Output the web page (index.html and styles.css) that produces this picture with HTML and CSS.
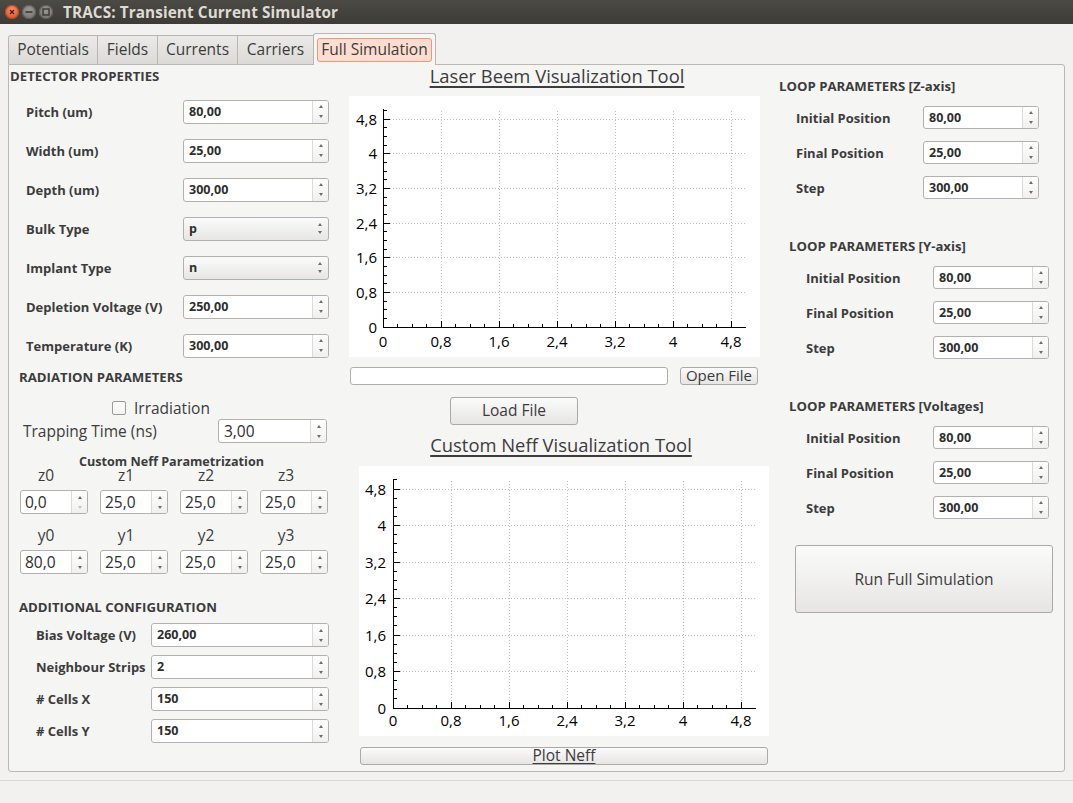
FILE: index.html
```html
<!DOCTYPE html>
<html>
<head>
<meta charset="utf-8">
<title>TRACS</title>
<link rel="stylesheet" href="styles.css">
</head>
<body>
<div class="titlebar">
  <div class="wbtns">
    <span class="wb close"><svg width="14" height="14" viewBox="0 0 14 14"><path d="M5 5L9 9M9 5L5 9" stroke="#4a1e0c" stroke-width="1.3"/></svg></span>
    <span class="wb min"><svg width="14" height="14" viewBox="0 0 14 14"><path d="M3.5 7H10.5" stroke="#3a3935" stroke-width="1.6"/></svg></span>
    <span class="wb max"><svg width="14" height="14" viewBox="0 0 14 14"><rect x="4" y="4" width="6" height="6" fill="none" stroke="#3a3935" stroke-width="1.4"/></svg></span>
  </div>
  <div class="wtitle">TRACS: Transient Current Simulator</div>
</div>

<div class="tabbar">
  <div class="tab t1">Potentials</div>
  <div class="tab t2">Fields</div>
  <div class="tab t3">Currents</div>
  <div class="tab t4">Carriers</div>
  <div class="tab active"><span class="tab-hl">Full Simulation</span></div>
</div>

<div class="pane">
  <!-- LEFT COLUMN -->
  <div class="col-left">
    <div class="sec-h det-h">DETECTOR PROPERTIES</div>
    <div class="det">
      <div class="row"><span class="lbl">Pitch (um)</span><div class="spin"><span class="val">80,00</span><span class="arr"><i class="up"></i><i class="dn"></i></span></div></div>
      <div class="row"><span class="lbl">Width (um)</span><div class="spin"><span class="val">25,00</span><span class="arr"><i class="up"></i><i class="dn"></i></span></div></div>
      <div class="row"><span class="lbl">Depth (um)</span><div class="spin"><span class="val">300,00</span><span class="arr"><i class="up"></i><i class="dn"></i></span></div></div>
      <div class="row"><span class="lbl">Bulk Type</span><div class="combo"><span class="val">p</span><span class="carr"><i class="up"></i><i class="dn"></i></span></div></div>
      <div class="row"><span class="lbl">Implant Type</span><div class="combo"><span class="val">n</span><span class="carr"><i class="up"></i><i class="dn"></i></span></div></div>
      <div class="row"><span class="lbl">Depletion Voltage (V)</span><div class="spin"><span class="val">250,00</span><span class="arr"><i class="up"></i><i class="dn"></i></span></div></div>
      <div class="row"><span class="lbl">Temperature (K)</span><div class="spin"><span class="val">300,00</span><span class="arr"><i class="up"></i><i class="dn"></i></span></div></div>
    </div>

    <div class="sec-h rad-h">RADIATION PARAMETERS</div>
    <div class="irr"><span class="cbox"></span><span class="irr-l">Irradiation</span></div>
    <div class="trap">
      <span class="trap-l">Trapping Time (ns)</span>
      <div class="spin trap-s"><span class="val reg">3,00</span><span class="arr"><i class="up"></i><i class="dn"></i></span></div>
    </div>
    <div class="neff-h">Custom Neff Parametrization</div>
    <div class="sgrid labels">
      <span>z0</span><span>z1</span><span>z2</span><span>z3</span>
    </div>
    <div class="sgrid boxes b1">
      <div class="spin sm"><span class="val reg">0,0</span><span class="arr"><i class="up"></i><i class="dn dis"></i></span></div>
      <div class="spin sm"><span class="val reg">25,0</span><span class="arr"><i class="up"></i><i class="dn"></i></span></div>
      <div class="spin sm"><span class="val reg">25,0</span><span class="arr"><i class="up"></i><i class="dn"></i></span></div>
      <div class="spin sm"><span class="val reg">25,0</span><span class="arr"><i class="up"></i><i class="dn"></i></span></div>
    </div>
    <div class="sgrid labels l2">
      <span>y0</span><span>y1</span><span>y2</span><span>y3</span>
    </div>
    <div class="sgrid boxes b2">
      <div class="spin sm"><span class="val reg">80,0</span><span class="arr"><i class="up"></i><i class="dn"></i></span></div>
      <div class="spin sm"><span class="val reg">25,0</span><span class="arr"><i class="up"></i><i class="dn"></i></span></div>
      <div class="spin sm"><span class="val reg">25,0</span><span class="arr"><i class="up"></i><i class="dn"></i></span></div>
      <div class="spin sm"><span class="val reg">25,0</span><span class="arr"><i class="up"></i><i class="dn"></i></span></div>
    </div>

    <div class="sec-h add-h">ADDITIONAL CONFIGURATION</div>
    <div class="add">
      <div class="row"><span class="lbl">Bias Voltage (V)</span><div class="spin"><span class="val">260,00</span><span class="arr"><i class="up"></i><i class="dn"></i></span></div></div>
      <div class="row"><span class="lbl">Neighbour Strips</span><div class="spin"><span class="val">2</span><span class="arr"><i class="up"></i><i class="dn"></i></span></div></div>
      <div class="row"><span class="lbl"># Cells X</span><div class="spin"><span class="val">150</span><span class="arr"><i class="up"></i><i class="dn"></i></span></div></div>
      <div class="row"><span class="lbl"># Cells Y</span><div class="spin"><span class="val">150</span><span class="arr"><i class="up"></i><i class="dn"></i></span></div></div>
    </div>
  </div>

  <!-- MIDDLE COLUMN -->
  <div class="col-mid">
    <div class="tool-h h1"><span>Laser Beem Visualization Tool</span></div>
    <div class="plot p1">
      <svg width="411" height="261" viewBox="0 0 411 261">
        <g stroke="#bdbdbd" stroke-dasharray="1 2" fill="none" shape-rendering="crispEdges">
          <path d="M41 23.5H396M41 57.5H396M41 92.5H396M41 127.5H396M41 161.5H396M41 196.5H396"/>
          <path d="M92.5 15V225M150.5 15V225M208.5 15V225M266.5 15V225M324.5 15V225M382.5 15V225"/>
        </g>
        <g stroke="#000" fill="none" shape-rendering="crispEdges">
          <path d="M34.5 13V232M34 231.5H397"/>
          <path d="M92.5 231V225M150.5 231V225M208.5 231V225M266.5 231V225M324.5 231V225M382.5 231V225"/>
          <path d="M48.5 231V228M63.5 231V228M77.5 231V228M106.5 231V228M121.5 231V228M135.5 231V228M164.5 231V228M179.5 231V228M193.5 231V228M222.5 231V228M237.5 231V228M251.5 231V228M280.5 231V228M295.5 231V228M309.5 231V228M338.5 231V228M353.5 231V228M367.5 231V228"/>
          <path d="M35 23.5H41M35 57.5H41M35 92.5H41M35 127.5H41M35 161.5H41M35 196.5H41"/>
          <path d="M35 222.5H38M35 213.5H38M35 205.5H38M35 187.5H38M35 179.5H38M35 170.5H38M35 153.5H38M35 144.5H38M35 135.5H38M35 118.5H38M35 109.5H38M35 101.5H38M35 83.5H38M35 75.5H38M35 66.5H38M35 49.5H38M35 40.5H38M35 31.5H38M35 14.5H38"/>
        </g>
        <g class="ax" text-anchor="end">
          <text x="28" y="29">4,8</text>
          <text x="28" y="63">4</text>
          <text x="28" y="98">3,2</text>
          <text x="28" y="133">2,4</text>
          <text x="28" y="167">1,6</text>
          <text x="28" y="202">0,8</text>
          <text x="28" y="237">0</text>
        </g>
        <g class="ax" text-anchor="middle">
          <text x="34" y="251">0</text>
          <text x="92" y="251">0,8</text>
          <text x="150" y="251">1,6</text>
          <text x="208" y="251">2,4</text>
          <text x="266" y="251">3,2</text>
          <text x="324" y="251">4</text>
          <text x="382" y="251">4,8</text>
        </g>
      </svg>
    </div>
    <div class="file-row">
      <div class="ledit"></div>
      <div class="btn open">Open File</div>
    </div>
    <div class="btn load">Load File</div>
    <div class="tool-h h2"><span>Custom Neff Visualization Tool</span></div>
    <div class="plot p2">
      <svg width="410" height="270" viewBox="0 0 410 270">
        <g stroke="#bdbdbd" stroke-dasharray="1 2" fill="none" shape-rendering="crispEdges">
          <path d="M41 23.5H396M41 59.5H396M41 96.5H396M41 132.5H396M41 169.5H396M41 205.5H396"/>
          <path d="M92.5 15V236M150.5 15V236M208.5 15V236M266.5 15V236M324.5 15V236M382.5 15V236"/>
        </g>
        <g stroke="#000" fill="none" shape-rendering="crispEdges">
          <path d="M34.5 13V243M34 242.5H397"/>
          <path d="M92.5 242V236M150.5 242V236M208.5 242V236M266.5 242V236M324.5 242V236M382.5 242V236"/>
          <path d="M48.5 242V239M63.5 242V239M77.5 242V239M106.5 242V239M121.5 242V239M135.5 242V239M164.5 242V239M179.5 242V239M193.5 242V239M222.5 242V239M237.5 242V239M251.5 242V239M280.5 242V239M295.5 242V239M309.5 242V239M338.5 242V239M353.5 242V239M367.5 242V239"/>
          <path d="M35 23.5H41M35 59.5H41M35 96.5H41M35 132.5H41M35 169.5H41M35 205.5H41"/>
          <path d="M35 232.5H38M35 223.5H38M35 214.5H38M35 196.5H38M35 187.5H38M35 178.5H38M35 159.5H38M35 150.5H38M35 141.5H38M35 123.5H38M35 114.5H38M35 105.5H38M35 86.5H38M35 77.5H38M35 68.5H38M35 50.5H38M35 41.5H38M35 32.5H38M35 13.5H38"/>
        </g>
        <g class="ax" text-anchor="end">
          <text x="27" y="29">4,8</text>
          <text x="27" y="65">4</text>
          <text x="27" y="102">3,2</text>
          <text x="27" y="138">2,4</text>
          <text x="27" y="175">1,6</text>
          <text x="27" y="211">0,8</text>
          <text x="27" y="248">0</text>
        </g>
        <g class="ax" text-anchor="middle">
          <text x="34" y="260">0</text>
          <text x="92" y="260">0,8</text>
          <text x="150" y="260">1,6</text>
          <text x="208" y="260">2,4</text>
          <text x="266" y="260">3,2</text>
          <text x="324" y="260">4</text>
          <text x="382" y="260">4,8</text>
        </g>
      </svg>
    </div>
    <div class="btn plotn"><span>Plot Neff</span></div>
  </div>

  <!-- RIGHT COLUMN -->
  <div class="col-right">
    <div class="loop lz">
      <div class="sec-h">LOOP PARAMETERS [Z-axis]</div>
      <div class="row"><span class="lbl">Initial Position</span><div class="spin"><span class="val">80,00</span><span class="arr"><i class="up"></i><i class="dn"></i></span></div></div>
      <div class="row"><span class="lbl">Final Position</span><div class="spin"><span class="val">25,00</span><span class="arr"><i class="up"></i><i class="dn"></i></span></div></div>
      <div class="row"><span class="lbl">Step</span><div class="spin"><span class="val">300,00</span><span class="arr"><i class="up"></i><i class="dn"></i></span></div></div>
    </div>
    <div class="loop ly">
      <div class="sec-h">LOOP PARAMETERS [Y-axis]</div>
      <div class="row"><span class="lbl">Initial Position</span><div class="spin"><span class="val">80,00</span><span class="arr"><i class="up"></i><i class="dn"></i></span></div></div>
      <div class="row"><span class="lbl">Final Position</span><div class="spin"><span class="val">25,00</span><span class="arr"><i class="up"></i><i class="dn"></i></span></div></div>
      <div class="row"><span class="lbl">Step</span><div class="spin"><span class="val">300,00</span><span class="arr"><i class="up"></i><i class="dn"></i></span></div></div>
    </div>
    <div class="loop lv">
      <div class="sec-h">LOOP PARAMETERS [Voltages]</div>
      <div class="row"><span class="lbl">Initial Position</span><div class="spin"><span class="val">80,00</span><span class="arr"><i class="up"></i><i class="dn"></i></span></div></div>
      <div class="row"><span class="lbl">Final Position</span><div class="spin"><span class="val">25,00</span><span class="arr"><i class="up"></i><i class="dn"></i></span></div></div>
      <div class="row"><span class="lbl">Step</span><div class="spin"><span class="val">300,00</span><span class="arr"><i class="up"></i><i class="dn"></i></span></div></div>
    </div>
    <div class="btn run">Run Full Simulation</div>
  </div>
</div>

<div class="statusbar"></div>
</body>
</html>
```

FILE: styles.css
```css
* { box-sizing: border-box; }
html, body { margin: 0; padding: 0; }
body {
  width: 1073px;
  height: 803px;
  overflow: hidden;
  background: #f2f1f0;
  font-family: "Open Sans", "Noto Sans", "DejaVu Sans", sans-serif;
  color: #3c3c3c;
}

/* Title bar */
.titlebar {
  height: 24px;
  background: linear-gradient(#4b4a45, #3c3b37);
  display: flex;
  align-items: center;
}
.wbtns {
  width: 63px;
  padding-left: 5px;
  display: flex;
  gap: 3px;
}
.wb {
  width: 14px;
  height: 14px;
  border-radius: 50%;
  display: block;
}
.wb svg { display: block; }
.wb.close {
  background: radial-gradient(circle at 50% 35%, #f6946a, #e0592d 70%);
  box-shadow: inset 0 0 0 1px #b8461f;
}
.wb.min, .wb.max {
  background: radial-gradient(circle at 50% 35%, #9a9994, #7a7974 70%);
  box-shadow: inset 0 0 0 1px #5e5d59;
}
.wtitle {
  color: #dfdbd2;
  font-weight: bold;
  font-size: 15.3px;
  letter-spacing: 0.1px;
}

/* Tabs */
.tabbar {
  height: 40px;
  padding-left: 8px;
  display: flex;
  align-items: flex-end;
}
.tab {
  height: 29px;
  border: 1px solid #b9b6b1;
  border-bottom: none;
  border-left: none;
  background: linear-gradient(#eceae8, #dcdad7);
  font-size: 15.5px;
  line-height: 27px;
  text-align: center;
  color: #3c3c3c;
}
.tab.t1 { width: 90px; border-left: 1px solid #b9b6b1; border-top-left-radius: 3px; }
.tab.t2 { width: 60px; }
.tab.t3 { width: 80px; }
.tab.t4 { width: 75px; border-right: none; }
.tab.active {
  width: 123px;
  height: 32px;
  margin-bottom: -1px;
  position: relative;
  z-index: 2;
  border: 1px solid #b9b6b1;
  border-bottom: none;
  border-radius: 3px 3px 0 0;
  background: #f5f5f4;
  padding: 4px 3px 0 3px;
}
.tab-hl {
  display: block;
  height: 24px;
  background: #fcddd0;
  border: 1px solid #ef9677;
  border-radius: 3px;
  line-height: 21px;
  font-size: 15.5px;
  text-align: center;
}

/* Pane */
.pane {
  margin-left: 8px;
  width: 1057px;
  height: 708px;
  border: 1px solid #bbb8b3;
  border-radius: 0 3px 3px 3px;
  background: #f5f5f4;
  display: flex;
  position: relative;
  z-index: 1;
}
.statusbar {
  margin-top: 8px;
  border-top: 1px solid #dcd9d4;
  height: 22px;
}

/* Common */
.sec-h {
  font-weight: bold;
  font-size: 13.2px;
  color: #3c3c3c;
  white-space: nowrap;
}
.row {
  display: flex;
  align-items: center;
}
.lbl {
  font-weight: bold;
  font-size: 13px;
  color: #3c3c3c;
  white-space: nowrap;
}
.spin, .combo {
  height: 24px;
  border: 1px solid #b4b1ac;
  border-radius: 3px;
  display: flex;
  overflow: hidden;
}
.spin { background: #fff; }
.combo {
  background: linear-gradient(#fbfbfb, #e7e6e5);
  justify-content: space-between;
}
.val {
  flex: 1;
  padding-left: 5px;
  font-weight: bold;
  font-size: 12.5px;
  line-height: 22px;
  color: #2e2e2e;
}
.val.reg {
  font-weight: normal;
  font-size: 15.5px;
  color: #2e2e2e;
}
.arr {
  width: 16px;
  border-left: 1px solid #dcdad7;
  background: linear-gradient(#ffffff, #f1f0ef);
  display: flex;
  flex-direction: column;
  align-items: center;
  justify-content: center;
  gap: 7px;
}
.carr {
  width: 16px;
  display: flex;
  flex-direction: column;
  align-items: center;
  justify-content: center;
  gap: 5px;
}
.up, .dn {
  display: block;
  width: 0;
  height: 0;
  border-left: 2.5px solid transparent;
  border-right: 2.5px solid transparent;
}
.up { border-bottom: 3px solid #6e6d6a; }
.dn { border-top: 3px solid #6e6d6a; }
.dn.dis { border-top-color: #c6c5c3; }

/* Left column */
.col-left {
  width: 331px;
  display: flex;
  flex-direction: column;
}
.det-h {
  height: 22px;
  line-height: 22px;
  padding-left: 1px;
}
.det { margin-top: 5px; }
.det .row { height: 39px; }
.det .lbl { width: 174px; padding-left: 17px; }
.det .spin, .det .combo { width: 146px; }

.rad-h {
  height: 24px;
  line-height: 24px;
  padding-left: 10px;
}
.irr {
  margin-top: 8px;
  height: 22px;
  display: flex;
  align-items: center;
  padding-left: 103px;
}
.cbox {
  width: 14px;
  height: 14px;
  border: 1px solid #9d9b97;
  border-radius: 2px;
  background: linear-gradient(#ffffff, #f3f3f3);
  margin-right: 8px;
}
.irr-l {
  font-size: 15.5px;
  color: #3c3c3c;
}
.trap {
  height: 24px;
  display: flex;
  align-items: center;
}
.trap-l {
  width: 209px;
  padding-left: 14px;
  font-size: 15.5px;
  color: #3c3c3c;
}
.trap .spin { width: 109px; }
.neff-h {
  margin-top: 13px;
  height: 11px;
  line-height: 11px;
  font-weight: bold;
  font-size: 12.6px;
  text-align: center;
  width: 331px;
  padding-right: 6px;
  white-space: nowrap;
}
.sgrid {
  margin-left: 11px;
  display: grid;
  grid-template-columns: repeat(4, 68px);
  column-gap: 12px;
}
.sgrid.labels span {
  width: 52px;
  text-align: center;
  font-size: 15.5px;
  color: #3c3c3c;
  height: 14px;
  line-height: 14px;
}
.sgrid.labels { margin-top: 1px; }
.sgrid.b1 { margin-top: 8px; }
.sgrid.l2 { margin-top: 14px; }
.sgrid.b2 { margin-top: 8px; }
.spin.sm { width: 68px; }
.spin.sm .val { padding-left: 4px; }

.add-h {
  margin-top: 23px;
  height: 20px;
  line-height: 20px;
  padding-left: 10px;
}
.add { margin-top: 2px; }
.add .row { height: 32px; }
.add .lbl { width: 142px; padding-left: 27px; }
.add .spin { width: 178px; }

/* Middle column */
.col-mid {
  width: 434px;
  display: flex;
  flex-direction: column;
}
.tool-h {
  text-align: center;
  font-size: 18.4px;
  color: #3c3c3c;
  white-space: nowrap;
}
.tool-h span {
  text-decoration: underline;
  text-decoration-thickness: 1.5px;
  text-underline-offset: 3px;
}
.tool-h.h1 { height: 25px; line-height: 22px; }
.tool-h.h2 { margin-top: 8px; height: 26px; line-height: 24px; padding-left: 8px; }
.plot { background: #fff; }
.plot svg { display: block; }
.plot .ax text { font-family: "Open Sans", "Noto Sans", sans-serif; font-size: 15px; fill: #000; }
.p1 { margin-top: 6px; margin-left: 9px; width: 411px; height: 261px; }
.p2 { margin-top: 7px; margin-left: 19px; width: 410px; height: 270px; }
.file-row {
  margin-top: 10px;
  margin-left: 10px;
  display: flex;
  gap: 12px;
}
.ledit {
  width: 318px;
  height: 18px;
  background: #fff;
  border: 1px solid #b1aeaa;
  border-radius: 3px;
}
.btn {
  background: linear-gradient(#fbfbfb, #e6e5e3);
  border: 1px solid #ada9a4;
  border-radius: 3px;
  text-align: center;
  color: #3c3c3c;
  white-space: nowrap;
}
.btn.open {
  width: 78px;
  height: 18px;
  font-size: 15px;
  line-height: 15px;
}
.btn.load {
  margin-top: 12px;
  margin-left: 110px;
  width: 128px;
  height: 28px;
  font-size: 15.5px;
  line-height: 25px;
}
.btn.plotn {
  margin-top: 11px;
  margin-left: 20px;
  width: 408px;
  height: 18px;
  font-size: 15.5px;
  line-height: 15px;
}
.btn.plotn span { text-decoration: underline; text-underline-offset: 2px; }

/* Right column */
.col-right {
  flex: 1;
  display: flex;
  flex-direction: column;
}
.loop .sec-h {
  height: 22px;
  line-height: 22px;
  padding-left: 5px;
}
.loop .row { height: 35px; }
.loop .lbl { width: 149px; padding-left: 22px; }
.loop .spin { width: 116px; height: 23px; }
.loop .val { line-height: 21px; }
.loop .sec-h + .row { margin-top: 3px; }
.lz { margin-top: 10px; }
.ly { margin-top: 30px; margin-left: 10px; }
.lv { margin-top: 30px; margin-left: 10px; }
.btn.run {
  margin-top: 20px;
  margin-left: 21px;
  width: 258px;
  height: 68px;
  font-size: 15.5px;
  line-height: 66px;
}
```
